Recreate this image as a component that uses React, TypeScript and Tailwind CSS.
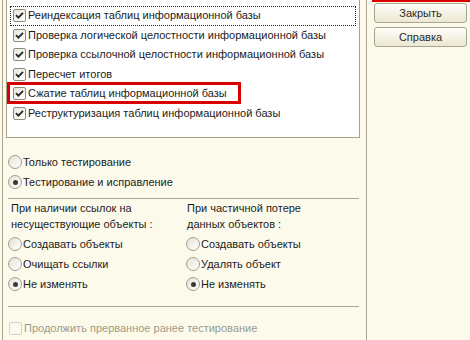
import React from 'react';

const font = { fontFamily: '"Liberation Sans", Arial, sans-serif' };

function Check({ disabled = false }: { disabled?: boolean }) {
  return (
    <span
      className={`inline-flex w-[13px] h-[13px] shrink-0 items-center justify-center rounded-[2px] border ${
        disabled ? 'border-[#d6d3c2] bg-[#fbfaf0]' : 'border-[#8e8b79] bg-gradient-to-br from-[#e9e7dc] to-white'
      }`}
    >
      {!disabled && (
        <svg width="9" height="9" viewBox="0 0 9 9">
          <path d="M1 4.2 L3.4 6.6 L8 1.8" fill="none" stroke="#2b2b2b" strokeWidth="1.9" />
        </svg>
      )}
    </span>
  );
}

function Radio({ on = false }: { on?: boolean }) {
  return (
    <span className="inline-flex w-[14px] h-[14px] shrink-0 items-center justify-center rounded-full border border-[#a19e8c] bg-gradient-to-br from-[#e4e2d6] to-white">
      {on && <span className="w-[5px] h-[5px] rounded-full bg-[#3a3a3a]" />}
    </span>
  );
}

const checks = [
  'Реиндексация таблиц информационной базы',
  'Проверка логической целостности информационной базы',
  'Проверка ссылочной целостности информационной базы',
  'Пересчет итогов',
  'Сжатие таблиц информационной базы',
  'Реструктуризация таблиц информационной базы',
];

export default function App() {
  return (
    <div className="w-[470px] h-[340px] overflow-hidden bg-[#fcfaeb] flex text-[11px] text-[#1c1c1c]" style={font}>
      {/* Left panel */}
      <div className="ml-[2px] w-[365px] h-full border-l border-r border-[#aaa48e] flex flex-col">
        {/* List box */}
        <div className="relative ml-[3px] mr-[6px] h-[138px] bg-white border border-t-0 border-[#a8a28c] pt-[6px]">
          {checks.map((c, i) => (
            <div
              key={c}
              className={`h-[19.5px] mx-[3px] pl-[3px] flex items-center gap-[2px] ${
                i === 0 ? 'outline outline-1 outline-dotted outline-[#222] -outline-offset-1' : ''
              }`}
            >
              <Check />
              <span className="leading-none">{c}</span>
            </div>
          ))}
          <div className="absolute left-[0px] top-[82px] w-[234px] h-[22px] border-[3px] border-[#d90000]" />
        </div>

        {/* Mode radios */}
        <div className="pt-[14px] pl-[5px] flex flex-col">
          <div className="h-[20px] flex items-center gap-[1px]">
            <Radio />
            <span>Только тестирование</span>
          </div>
          <div className="h-[20px] flex items-center gap-[1px]">
            <Radio on />
            <span>Тестирование и исправление</span>
          </div>
        </div>

        <div className="mt-[6px] ml-[5px] mr-[7px] border-t border-[#aaa48e]" />

        {/* Two option groups */}
        <div className="pt-[1px] grid grid-cols-[178px_1fr] pl-[5px]">
          <div className="flex flex-col">
            <div className="leading-[16px] pl-[3px]">
              При наличии ссылок на
              <br />
              несуществующие объекты :
            </div>
            <div className="h-[20px] mt-[2px] flex items-center gap-[1px]">
              <Radio />
              <span>Создавать объекты</span>
            </div>
            <div className="h-[20px] flex items-center gap-[1px]">
              <Radio />
              <span>Очищать ссылки</span>
            </div>
            <div className="h-[20px] flex items-center gap-[1px]">
              <Radio on />
              <span>Не изменять</span>
            </div>
          </div>
          <div className="flex flex-col">
            <div className="leading-[16px] pl-[1px]">
              При частичной потере
              <br />
              данных объектов :
            </div>
            <div className="h-[20px] mt-[2px] flex items-center gap-[1px]">
              <Radio />
              <span>Создавать объекты</span>
            </div>
            <div className="h-[20px] flex items-center gap-[1px]">
              <Radio />
              <span>Удалять объект</span>
            </div>
            <div className="h-[20px] flex items-center gap-[1px]">
              <Radio on />
              <span>Не изменять</span>
            </div>
          </div>
        </div>

        <div className="mt-[12px] ml-[5px] mr-[7px] border-t border-[#aaa48e]" />

        <div className="mt-[12px] pl-[6px] h-[18px] flex items-center gap-[2px] text-[#9d9a88]">
          <Check disabled />
          <span>Продолжить прерванное ранее тестирование</span>
        </div>
      </div>

      {/* Right panel */}
      <div className="flex-1 flex flex-col pl-[5px]">
        <div className="h-[2px] bg-[#d90000]" />
        <div className="mt-[1px] flex flex-col gap-[4px] w-[93px] ml-[2px]">
          {['Закрыть', 'Справка'].map((b) => (
            <div
              key={b}
              className="h-[20px] rounded-[3px] border border-[#aaa58f] bg-gradient-to-b from-[#fffef8] to-[#ebe7d3] flex items-center justify-center text-[#2a2a2a]"
            >
              {b}
            </div>
          ))}
        </div>
      </div>
    </div>
  );
}
